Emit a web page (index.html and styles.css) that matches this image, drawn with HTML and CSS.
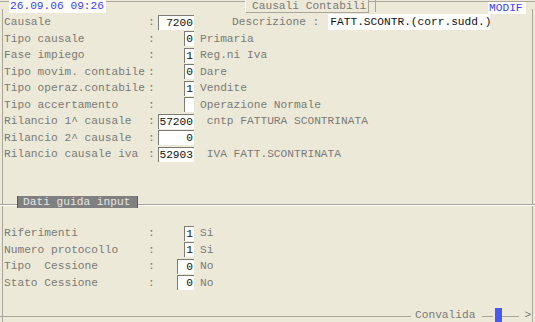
FILE: index.html
```html
<!DOCTYPE html>
<html>
<head>
<meta charset="utf-8">
<link rel="stylesheet" href="styles.css">
</head>
<body>
<div class="screen">
  <div class="topbar">
    <div class="date">26.09.06 09:26</div>
    <div class="title">Causali Contabili</div>
    <div class="tick"></div>
    <div class="modif">MODIF</div>
  </div>

  <div class="form">
    <div class="row">
      <span class="lbl">Causale</span><span class="colon">:</span>
      <span class="fcell"><span class="box w5">7200</span></span>
      <span class="dlbl">Descrizione :</span>
      <span class="dbox">FATT.SCONTR.(corr.sudd.)</span>
    </div>
    <div class="row">
      <span class="lbl">Tipo causale</span><span class="colon">:</span>
      <span class="fcell"><span class="box w1">0</span></span>
      <span class="desc">Primaria</span>
    </div>
    <div class="row">
      <span class="lbl">Fase impiego</span><span class="colon">:</span>
      <span class="fcell"><span class="box w1">1</span></span>
      <span class="desc">Reg.ni Iva</span>
    </div>
    <div class="row">
      <span class="lbl">Tipo movim. contabile</span><span class="colon">:</span>
      <span class="fcell"><span class="box w1">0</span></span>
      <span class="desc">Dare</span>
    </div>
    <div class="row">
      <span class="lbl">Tipo operaz.contabile</span><span class="colon">:</span>
      <span class="fcell"><span class="box w1">1</span></span>
      <span class="desc">Vendite</span>
    </div>
    <div class="row">
      <span class="lbl">Tipo accertamento</span><span class="colon">:</span>
      <span class="fcell"><span class="box w1"></span></span>
      <span class="desc">Operazione Normale</span>
    </div>
    <div class="row">
      <span class="lbl">Rilancio 1^ causale</span><span class="colon">:</span>
      <span class="fcell"><span class="box w5">57200</span></span>
      <span class="desc"> cntp FATTURA SCONTRINATA</span>
    </div>
    <div class="row">
      <span class="lbl">Rilancio 2^ causale</span><span class="colon">:</span>
      <span class="fcell"><span class="box w5">0</span></span>
    </div>
    <div class="row">
      <span class="lbl">Rilancio causale iva</span><span class="colon">:</span>
      <span class="fcell"><span class="box w5">52903</span></span>
      <span class="desc"> IVA FATT.SCONTRINATA</span>
    </div>
  </div>

  <div class="section">
    <div class="sline short"></div>
    <div class="shead">Dati guida input</div>
    <div class="sline grow"></div>
  </div>

  <div class="form">
    <div class="row">
      <span class="lbl">Riferimenti</span><span class="colon">:</span>
      <span class="fcell"><span class="box w1">1</span></span>
      <span class="desc">Si</span>
    </div>
    <div class="row">
      <span class="lbl">Numero protocollo</span><span class="colon">:</span>
      <span class="fcell"><span class="box w1">1</span></span>
      <span class="desc">Si</span>
    </div>
    <div class="row">
      <span class="lbl">Tipo  Cessione</span><span class="colon">:</span>
      <span class="fcell"><span class="box w2">0</span></span>
      <span class="desc">No</span>
    </div>
    <div class="row">
      <span class="lbl">Stato Cessione</span><span class="colon">:</span>
      <span class="fcell"><span class="box w2">0</span></span>
      <span class="desc">No</span>
    </div>
  </div>

  <div class="footer">
    <div class="fline fl1"></div>
    <span class="conv">Convalida</span>
    <div class="fline fl2"></div>
    <div class="cursor"></div>
    <div class="fline fl3"></div>
    <span class="arrow">&gt;</span>
  </div>
</div>
</body>
</html>
```

FILE: styles.css
```css
* { box-sizing: border-box; }
html, body { margin: 0; padding: 0; }
body {
  width: 535px;
  height: 322px;
  overflow: hidden;
  background: #ECE9D8;
  font-family: "Liberation Mono", "DejaVu Sans Mono", monospace;
  font-size: 11.2px;
  color: #7b7a76;
}
.screen {
  height: 322px;
  display: flex;
  flex-direction: column;
  background:
    linear-gradient(#a9a79b, #a9a79b) 0 1px / 100% 1px no-repeat,
    linear-gradient(#a9a79b, #a9a79b) 2px 9px / 1px 100% no-repeat,
    linear-gradient(#a9a79b, #a9a79b) 532px 9px / 1px 100% no-repeat;
}
.topbar {
  height: 14px;
  display: flex;
  align-items: flex-start;
}
.date {
  margin-left: 9px;
  width: 97px;
  height: 13px;
  background: #fff;
  color: #3c3cff;
  line-height: 13px;
  padding-left: 1px;
}
.title {
  margin-left: 139px;
  width: 124px;
  height: 13px;
  background: #ECE9D8;
  border: 1px solid #a9a79b;
  border-top: none;
  border-left-color: #fff;
  line-height: 12px;
  padding-left: 6px;
}
.tick {
  margin-left: 6px;
  width: 1px;
  height: 12px;
  background: #a9a79b;
}
.modif {
  margin-left: 112px;
  margin-top: 2px;
  width: 38px;
  height: 12px;
  background: #fff;
  color: #3c3cff;
  line-height: 12px;
  padding-left: 1px;
}
.form {
  display: flex;
  flex-direction: column;
  padding-left: 4px;
}
.row {
  display: flex;
  align-items: center;
  height: 16.5px;
  white-space: pre;
}
.lbl { width: 144px; }
.colon { width: 9px; }
.fcell {
  width: 37px;
  display: flex;
  justify-content: flex-end;
}
.box {
  display: block;
  height: 15px;
  background: #fff;
  border-left: 1px solid #7c7b76;
  border-top: 1px solid #7c7b76;
  color: #111;
  line-height: 14px;
  text-align: right;
  padding-right: 1px;
}
.w1 { width: 10px; }
.w2 { width: 17px; }
.w5 { width: 36px; }
.desc { margin-left: 6px; }
.dlbl { margin-left: 38px; }
.dbox {
  margin-left: 9px;
  width: 162px;
  height: 16px;
  background: #fff;
  color: #111;
  line-height: 16px;
  padding-left: 2px;
}
.section {
  height: 62.25px;
  display: flex;
  align-items: flex-start;
  padding-top: 33px;
}
.sline {
  height: 1px;
  background: #a9a79b;
  margin-top: 8px;
  box-shadow: 0 1px 0 #fff;
}
.short { width: 17px; }
.grow { flex: 1; }
.shead {
  width: 121px;
  height: 12px;
  background: #808080;
  color: #e6e6e6;
  line-height: 12px;
  padding-left: 5px;
  border-left: 1px solid #5a5a5a;
  border-right: 1px solid #5a5a5a;
}
.footer {
  flex: 1;
  display: flex;
  align-items: flex-end;
}
.fline {
  height: 1px;
  background: #a9a79b;
  margin-bottom: 5px;
}
.fl1 { width: 411px; }
.fl2 { width: 11px; margin-left: 7px; }
.fl3 { width: 17px; }
.conv { line-height: 14px; margin-left: 4px; }
.cursor {
  margin-left: 2px;
  width: 7px;
  height: 14px;
  background: #4a58ee;
}
.arrow { margin-left: 5px; line-height: 14px; }
```
